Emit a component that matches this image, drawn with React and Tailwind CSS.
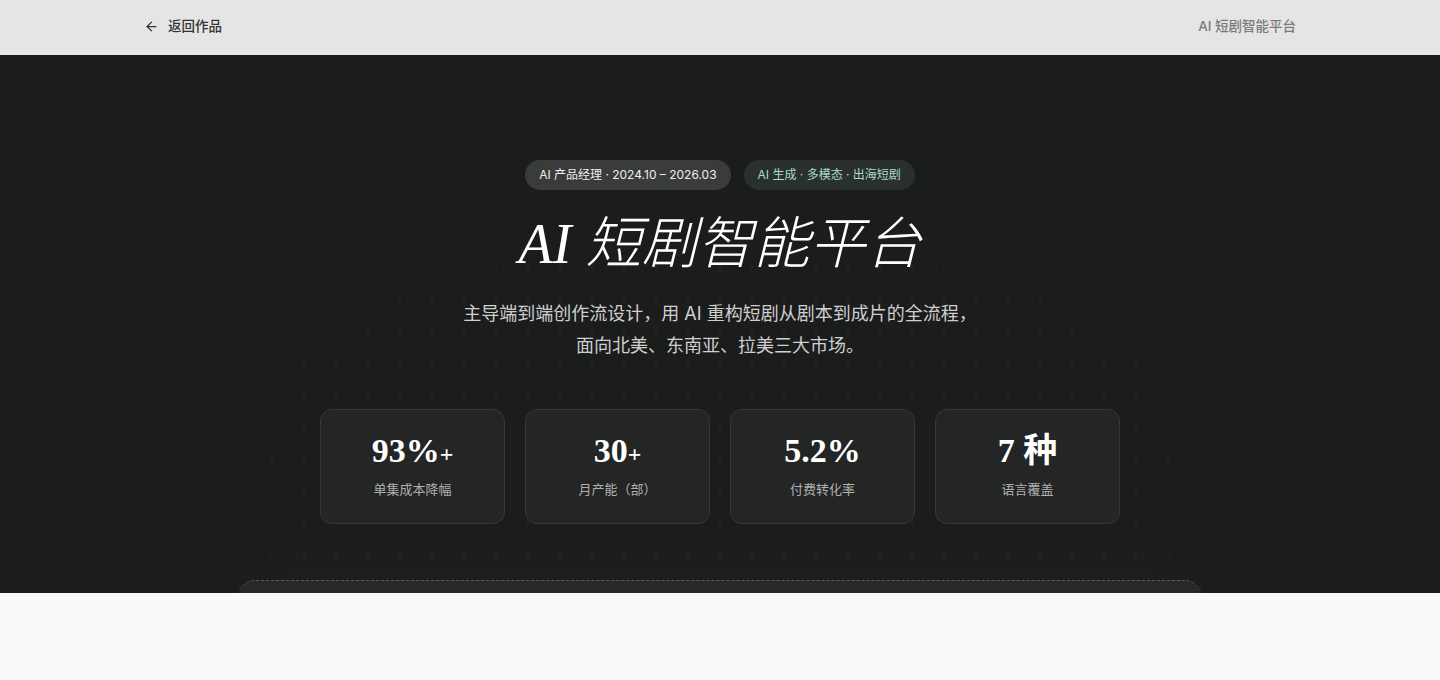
import { ArrowLeft } from "lucide-react";

const sans = "font-['Inter','Noto_Sans_CJK_SC',sans-serif]";

const stats = [
  { value: "93%", suffix: "+", label: "单集成本降幅" },
  { value: "30", suffix: "+", label: "月产能（部）" },
  { value: "5.2%", suffix: "", label: "付费转化率" },
  { value: "7 种", suffix: "", label: "语言覆盖" },
];

function TopBar() {
  return (
    <header className="h-[55px] bg-[#e5e5e5]">
      <div className="mx-auto flex h-full max-w-[1152px] items-center justify-between pb-[3px]">
        <a className="flex items-center gap-[9px] text-[13.5px] font-medium text-[#333]">
          <ArrowLeft size={15} strokeWidth={2} />
          <span>返回作品</span>
        </a>
        <span className="text-[13.5px] font-medium text-[#7a7a7a]">AI 短剧智能平台</span>
      </div>
    </header>
  );
}

function StatCard({ value, suffix, label }) {
  return (
    <div className="flex h-[115px] flex-col items-center justify-center rounded-xl border border-[#363737] bg-[#262727]/90">
      <p className="font-['Liberation_Serif','Noto_Sans_CJK_SC',serif] text-[34px] font-bold leading-none text-white">
        {value}
        {suffix && <span className="text-[24px]">{suffix}</span>}
      </p>
      <p className="mt-3 text-[13px] text-[#b0b0b0]">{label}</p>
    </div>
  );
}

function Hero() {
  return (
    <section className="relative h-[538px] overflow-hidden bg-[#1b1c1c]">
      <div className="pointer-events-none absolute inset-0 bg-[radial-gradient(circle,#2c2d2d_1px,transparent_1.5px)] bg-[length:32px_32px] bg-[position:0_4px] [mask-image:radial-gradient(ellipse_65%_85%_at_50%_75%,black_45%,transparent_100%)]" />
      <div className="relative flex flex-col items-center pt-[105px]">
        <div className="flex gap-[13px]">
          <span className="rounded-full bg-[#3a3b3b] px-[14px] py-[7px] text-[12px] leading-4 text-[#eeeeee]">
            AI 产品经理 · 2024.10 – 2026.03
          </span>
          <span className="rounded-full bg-[#2a302e] px-[14px] py-[7px] text-[12px] leading-4 text-[#a9dccb]">
            AI 生成 · 多模态 · 出海短剧
          </span>
        </div>
        <h1 className="mt-[22px] font-['Liberation_Serif','Noto_Sans_CJK_SC',serif] text-[56px] font-light italic leading-[64px] text-white">
          AI 短剧智能平台
        </h1>
        <p className="mt-[22px] text-center text-[18px] leading-8 text-[#cfcfcf]">
          主导端到端创作流设计，用 AI 重构短剧从剧本到成片的全流程，
          <br />
          面向北美、东南亚、拉美三大市场。
        </p>
        <div className="mt-[47px] grid w-[800px] grid-cols-4 gap-5">
          {stats.map((s) => (
            <StatCard key={s.label} {...s} />
          ))}
        </div>
        <div className="mt-[56px] h-[60px] w-[964px] rounded-t-[18px] border-t border-dashed border-[#5a5b5b] bg-[#272828] shadow-[0_-20px_60px_rgba(255,255,255,0.02)]" />
      </div>
    </section>
  );
}

export default function App() {
  return (
    <div className={`${sans} min-h-[680px] bg-[#fafafa]`}>
      <TopBar />
      <Hero />
      <div className="h-[87px] bg-[#fafafa]" />
    </div>
  );
}
